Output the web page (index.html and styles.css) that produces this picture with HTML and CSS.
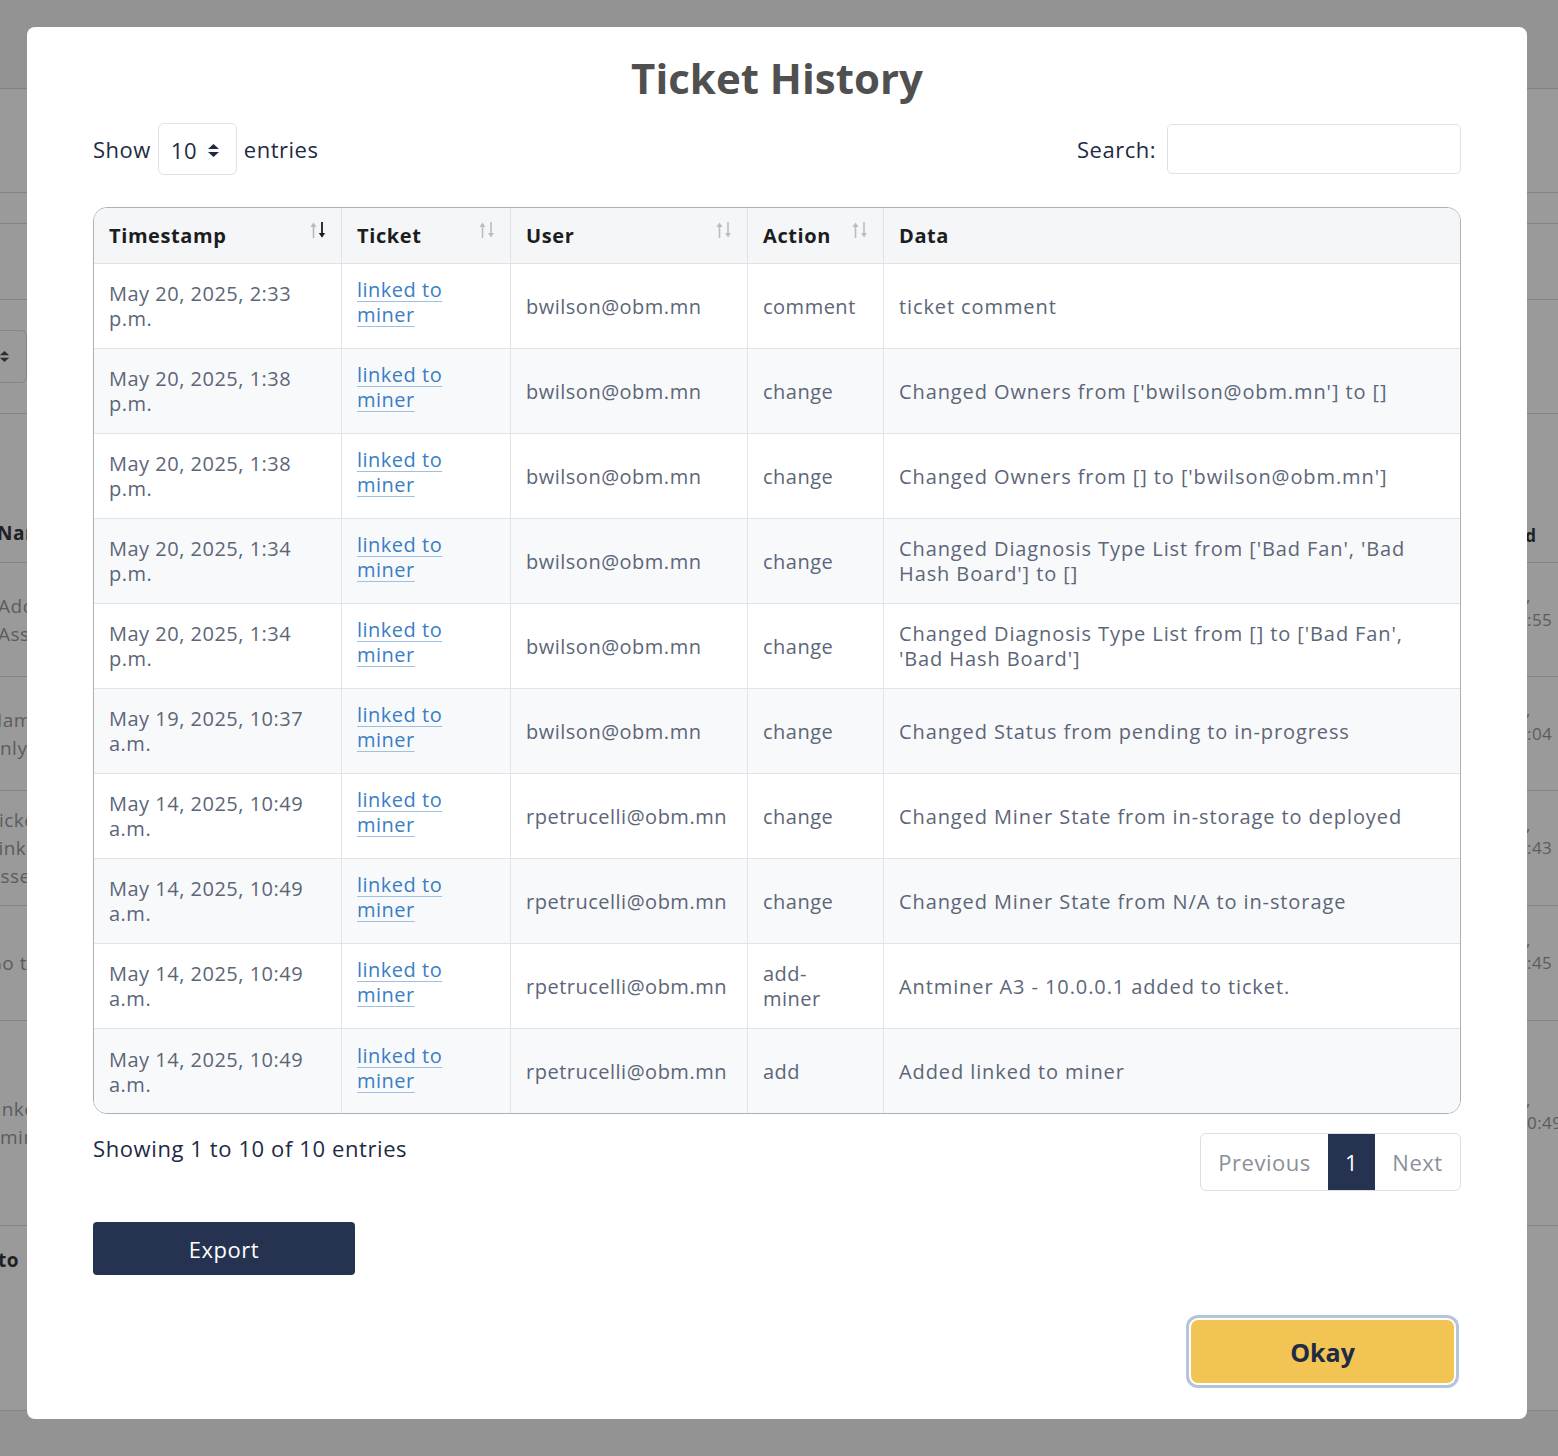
FILE: index.html
```html
<!DOCTYPE html>
<html lang="en">
<head>
<meta charset="utf-8">
<title>Ticket History</title>
<link rel="stylesheet" href="styles.css">
</head>
<body>
<div class="page" aria-hidden="true">
  <div class="page-top"></div>
  <div class="page-main">
    <div class="bg-row h104"></div>
    <div class="bg-row h31"></div>
    <div class="bg-row h76"></div>
    <div class="bg-row h114">
      <div class="bg-select">
        <svg width="11" height="13" viewBox="0 0 13 15"><path d="M1 6L6.5 1L12 6Z M1 9L6.5 14L12 9Z" fill="#2b2e33"/></svg>
      </div>
    </div>
    <div class="bg-row h149 bg-head">
      <div class="bg-left cut-3">Name</div>
      <div class="bg-right">Created</div>
    </div>
    <div class="bg-row h114">
      <div class="bg-left cut-2"><div>Add Miner</div><div>Asset</div></div>
      <div class="bg-right">May 20,<br>2025, 2:55<br>p.m.</div>
    </div>
    <div class="bg-row h114">
      <div class="bg-left cut-12"><div>Name</div><div>only</div></div>
      <div class="bg-right">May 19,<br>2025, 9:04<br>a.m.</div>
    </div>
    <div class="bg-row h115">
      <div class="bg-left cut-12"><div>Ticket</div><div>Linked</div><div>Asset</div></div>
      <div class="bg-right">May 14,<br>2025, 8:43<br>a.m.</div>
    </div>
    <div class="bg-row h115">
      <div class="bg-left cut-12"><div>Go to link</div></div>
      <div class="bg-right">May 14,<br>2025, 8:45<br>a.m.</div>
    </div>
    <div class="bg-row h205">
      <div class="bg-left cut-14"><div>Linked to</div><div class="uncut">miner</div></div>
      <div class="bg-right">May 14,<br>2025, 10:49<br>a.m.</div>
    </div>
    <div class="bg-row h185 bg-sub">
      <div class="bg-left cut-2">to</div>
    </div>
  </div>
  <div class="page-bottom"></div>
</div>

<div class="overlay">
  <div class="modal" role="dialog" aria-labelledby="ticket-history-title">
    <h1 class="modal-title" id="ticket-history-title">Ticket History</h1>

    <div class="dt-controls">
      <div class="dt-length">
        <span>Show</span>
        <span class="select-box">
          <span>10</span>
          <svg width="13" height="15" viewBox="0 0 13 15"><path d="M1 6L6.5 1L12 6Z M1 9L6.5 14L12 9Z" fill="#1e2a44"/></svg>
        </span>
        <span>entries</span>
      </div>
      <div class="dt-search">
        <span>Search:</span>
        <input type="text" class="search-input" aria-label="Search">
      </div>
    </div>

    <div class="table-wrap">
      <table class="history">
        <colgroup>
          <col class="c-ts"><col class="c-ticket"><col class="c-user"><col class="c-action"><col>
        </colgroup>
        <thead>
          <tr>
            <th><div class="th-in"><span>Timestamp</span>
              <svg class="sort" width="18" height="18" viewBox="0 0 18 18"><path d="M4.5 17V3.5" stroke="#b8b9bb" stroke-width="1.6"/><path d="M1.5 6L4.5 1.5L7.5 6Z" fill="#b8b9bb"/><path d="M13 1V14" stroke="#1d1d1f" stroke-width="1.8"/><path d="M9.8 12L13 16.8L16.2 12Z" fill="#1d1d1f"/></svg>
            </div></th>
            <th><div class="th-in"><span>Ticket</span>
              <svg class="sort" width="18" height="18" viewBox="0 0 18 18"><path d="M4.5 17V3.5" stroke="#bcbdbf" stroke-width="1.6"/><path d="M1.5 6L4.5 1.5L7.5 6Z" fill="#bcbdbf"/><path d="M13 1V14" stroke="#bcbdbf" stroke-width="1.6"/><path d="M10 12L13 16.5L16 12Z" fill="#bcbdbf"/></svg>
            </div></th>
            <th><div class="th-in"><span>User</span>
              <svg class="sort" width="18" height="18" viewBox="0 0 18 18"><path d="M4.5 17V3.5" stroke="#bcbdbf" stroke-width="1.6"/><path d="M1.5 6L4.5 1.5L7.5 6Z" fill="#bcbdbf"/><path d="M13 1V14" stroke="#bcbdbf" stroke-width="1.6"/><path d="M10 12L13 16.5L16 12Z" fill="#bcbdbf"/></svg>
            </div></th>
            <th><div class="th-in"><span>Action</span>
              <svg class="sort" width="18" height="18" viewBox="0 0 18 18"><path d="M4.5 17V3.5" stroke="#bcbdbf" stroke-width="1.6"/><path d="M1.5 6L4.5 1.5L7.5 6Z" fill="#bcbdbf"/><path d="M13 1V14" stroke="#bcbdbf" stroke-width="1.6"/><path d="M10 12L13 16.5L16 12Z" fill="#bcbdbf"/></svg>
            </div></th>
            <th><div class="th-in"><span>Data</span></div></th>
          </tr>
        </thead>
        <tbody>
          <tr><td>May 20, 2025, 2:33 p.m.</td><td><a href="#">linked to miner</a></td><td>bwilson@obm.mn</td><td>comment</td><td>ticket comment</td></tr>
          <tr><td>May 20, 2025, 1:38 p.m.</td><td><a href="#">linked to miner</a></td><td>bwilson@obm.mn</td><td>change</td><td>Changed Owners from ['bwilson@obm.mn'] to []</td></tr>
          <tr><td>May 20, 2025, 1:38 p.m.</td><td><a href="#">linked to miner</a></td><td>bwilson@obm.mn</td><td>change</td><td>Changed Owners from [] to ['bwilson@obm.mn']</td></tr>
          <tr><td>May 20, 2025, 1:34 p.m.</td><td><a href="#">linked to miner</a></td><td>bwilson@obm.mn</td><td>change</td><td>Changed Diagnosis Type List from ['Bad Fan', 'Bad Hash Board'] to []</td></tr>
          <tr><td>May 20, 2025, 1:34 p.m.</td><td><a href="#">linked to miner</a></td><td>bwilson@obm.mn</td><td>change</td><td>Changed Diagnosis Type List from [] to ['Bad Fan', 'Bad Hash Board']</td></tr>
          <tr><td>May 19, 2025, 10:37 a.m.</td><td><a href="#">linked to miner</a></td><td>bwilson@obm.mn</td><td>change</td><td>Changed Status from pending to in-progress</td></tr>
          <tr><td>May 14, 2025, 10:49 a.m.</td><td><a href="#">linked to miner</a></td><td>rpetrucelli@obm.mn</td><td>change</td><td>Changed Miner State from in-storage to deployed</td></tr>
          <tr><td>May 14, 2025, 10:49 a.m.</td><td><a href="#">linked to miner</a></td><td>rpetrucelli@obm.mn</td><td>change</td><td>Changed Miner State from N/A to in-storage</td></tr>
          <tr><td>May 14, 2025, 10:49 a.m.</td><td><a href="#">linked to miner</a></td><td>rpetrucelli@obm.mn</td><td>add-miner</td><td>Antminer A3 - 10.0.0.1 added to ticket.</td></tr>
          <tr><td>May 14, 2025, 10:49 a.m.</td><td><a href="#">linked to miner</a></td><td>rpetrucelli@obm.mn</td><td>add</td><td>Added linked to miner</td></tr>
        </tbody>
      </table>
    </div>

    <div class="dt-footer">
      <div class="dt-info">Showing 1 to 10 of 10 entries</div>
      <div class="pager">
        <span class="pg pg-prev">Previous</span>
        <span class="pg pg-num active">1</span>
        <span class="pg pg-next">Next</span>
      </div>
    </div>

    <button class="btn-export" type="button">Export</button>

    <div class="modal-actions">
      <button class="btn-okay" type="button">Okay</button>
    </div>
  </div>
</div>
</body>
</html>
```

FILE: styles.css
```css
* { box-sizing: border-box; }

html, body {
  margin: 0;
  height: 100%;
}

body {
  background: #939393;
  overflow: hidden;
  font-family: "Open Sans", "Noto Sans", sans-serif;
}

/* ---------- dimmed page behind the dialog ---------- */
.page { width: 1558px; }

.page-top {
  height: 89px;
  background: #939393;
  border-bottom: 1px solid #818182;
}

.page-main { background: #9a9a9a; }

.page-bottom { height: 60px; background: #939393; }

.bg-row {
  display: flex;
  justify-content: space-between;
  align-items: center;
  border-bottom: 1px solid #838384;
  color: #5a5c61;
  font-size: 19px;
  letter-spacing: 0.5px;
  line-height: 28px;
  white-space: nowrap;
}

.h31 { height: 31px; }
.h76 { height: 76px; }
.h104 { height: 104px; }
.h114 { height: 114px; }
.h115 { height: 115px; }
.h149 { height: 149px; }
.h185 { height: 185px; }
.h205 { height: 205px; }

.bg-head { align-items: flex-end; padding-bottom: 15px; }
.bg-head .bg-left, .bg-head .bg-right { color: #1f2023; font-weight: 700; }
.bg-sub { align-items: flex-start; padding-top: 20px; }
.bg-sub .bg-left { color: #1f2023; font-weight: 700; }

.bg-left { flex-shrink: 0; }
.cut-2 { margin-left: -2px; }
.cut-3 { margin-left: -3px; }
.cut-12 { margin-left: -12px; }
.cut-14 { margin-left: -14px; }
.uncut { margin-left: 14px; }

.bg-right {
  flex-shrink: 0;
  width: 92px;
  font-size: 17px;
  line-height: 23.5px;
}

.bg-select {
  width: 60px;
  height: 53px;
  margin-left: -33px;
  border: 1px solid #858586;
  border-radius: 6px;
  display: flex;
  align-items: center;
  justify-content: flex-end;
  padding-right: 16px;
}

/* ---------- overlay + dialog ---------- */
.overlay {
  position: fixed;
  inset: 0;
  padding: 27px;
}

.modal {
  width: 1500px;
  height: 1392px;
  background: #ffffff;
  border-radius: 8px;
  padding: 21px 66px 36px;
  display: flex;
  flex-direction: column;
}

.modal-title {
  margin: 0;
  text-align: center;
  font-size: 42px;
  line-height: 60px;
  font-weight: 700;
  color: #505050;
}

.dt-controls {
  margin-top: 15px;
  height: 52px;
  display: flex;
  justify-content: space-between;
  align-items: center;
  color: #1e2a44;
  font-size: 22px;
  letter-spacing: 0.5px;
}

.dt-length, .dt-search {
  display: flex;
  align-items: center;
}

.select-box {
  width: 79px;
  height: 52px;
  margin: 0 7px;
  border: 1px solid #dbe2ea;
  border-radius: 6px;
  display: flex;
  align-items: center;
  justify-content: space-between;
  padding: 2px 16px 0 12px;
}

.search-input {
  width: 294px;
  height: 50px;
  margin: 0 0 0 11px;
  border: 1px solid #dbe2ea;
  border-radius: 5px;
  background: #fff;
  font: inherit;
}

/* ---------- table ---------- */
.table-wrap {
  margin-top: 32px;
  border: 1px solid #a9b0bb;
  border-radius: 14px;
  overflow: hidden;
}

.history {
  width: 100%;
  border-collapse: separate;
  border-spacing: 0;
  table-layout: fixed;
}

.c-ts { width: 248px; }
.c-ticket { width: 169px; }
.c-user { width: 237px; }
.c-action { width: 136px; }

.history th {
  height: 56px;
  padding: 0 14px 0 15px;
  background: #f5f6f8;
  text-align: left;
  font-size: 20px;
  font-weight: 700;
  letter-spacing: 0.6px;
  color: #1c1d20;
  border-bottom: 1px solid #dfe3e8;
  border-right: 1px solid #dfe3e8;
}

.th-in {
  display: flex;
  justify-content: space-between;
  align-items: center;
}

.sort {
  flex-shrink: 0;
  margin-bottom: 12px;
}

.history td {
  height: 85px;
  padding: 0 14px 0 15px;
  vertical-align: middle;
  font-size: 20px;
  line-height: 25px;
  letter-spacing: 0.5px;
  color: #5c6678;
  border-bottom: 1px solid #e1e5ea;
  border-right: 1px solid #e1e5ea;
}

.history td:nth-child(4) { padding-right: 26px; }
.history td:last-child { letter-spacing: 0.9px; }

.history th:last-child, .history td:last-child { border-right: none; }
.history tbody tr:last-child td { border-bottom: none; }
.history tbody tr:nth-child(even) td { background: #f8f9fb; }

.history a {
  display: inline-block;
  margin-bottom: 8px;
  color: #3a7ec4;
  text-decoration: underline;
  text-decoration-color: #9fc0e3;
  text-decoration-thickness: 1px;
  text-underline-offset: 4px;
}

/* ---------- footer ---------- */
.dt-footer {
  margin-top: 19px;
  display: flex;
  justify-content: space-between;
  align-items: flex-start;
}

.dt-info {
  color: #1e2a44;
  font-size: 22px;
  letter-spacing: 0.6px;
  line-height: 30px;
}

.pager {
  display: flex;
  border: 1px solid #dcdfe4;
  border-radius: 6px;
  overflow: hidden;
  height: 58px;
}

.pg {
  display: flex;
  align-items: center;
  justify-content: center;
  font-size: 22px;
  letter-spacing: 0.5px;
  color: #8a9099;
}

.pg-prev { width: 127px; }
.pg-num { width: 47px; }
.pg-next { width: 85px; }

.pg.active {
  background: #263350;
  color: #ffffff;
}

.btn-export {
  margin-top: 31px;
  width: 262px;
  height: 53px;
  border: none;
  border-radius: 4px;
  background: #263350;
  color: #ffffff;
  font-family: inherit;
  font-size: 22px;
  letter-spacing: 0.5px;
}

.modal-actions {
  margin-top: 45px;
  display: flex;
  justify-content: flex-end;
  padding-right: 7px;
}

.btn-okay {
  width: 263px;
  height: 63px;
  border: none;
  border-radius: 7px;
  background: #f2c453;
  color: #1f2b45;
  font-family: inherit;
  font-size: 25px;
  font-weight: 700;
  box-shadow: 0 0 0 2px #ffffff, 0 0 0 5px #b5c4d8;
}
```
